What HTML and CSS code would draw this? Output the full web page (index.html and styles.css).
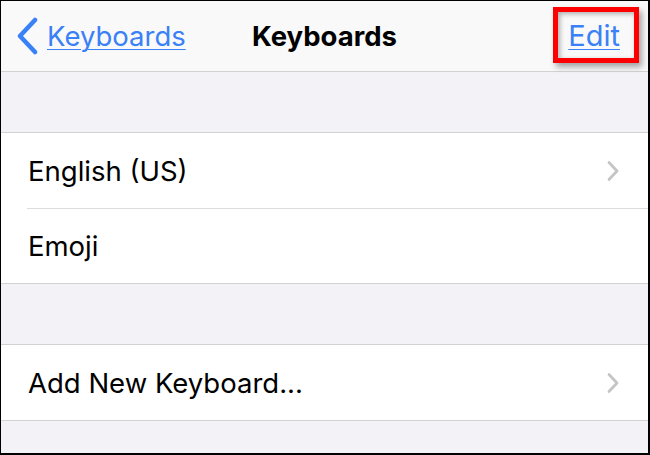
FILE: index.html
```html
<!DOCTYPE html>
<html lang="en">
<head>
    <meta charset="UTF-8">
    <title>Keyboards</title>
    <link rel="stylesheet" href="styles.css">
</head>
<body>
    <div class="screen">
        <div class="navbar">
            <a class="back" href="#">
                <svg class="back-chevron" width="22" height="38" viewBox="0 0 22 38">
                    <path d="M19 3 L4 19 L19 35" fill="none" stroke="#3a80f6" stroke-width="4.5" stroke-linecap="round" stroke-linejoin="round"/>
                </svg>
                <span class="back-label">Keyboards</span>
            </a>
            <h1 class="title">Keyboards</h1>
            <div class="edit-wrap">
                <a class="edit" href="#">Edit</a>
                <span class="highlight"></span>
            </div>
        </div>

        <div class="gap"></div>
        <div class="group">
            <div class="row">
                <span class="label">English (US)</span>
                <svg class="chevron" width="14" height="22" viewBox="0 0 14 22">
                    <path d="M3 2.5 L11 11 L3 19.5" fill="none" stroke="#c5c5c8" stroke-width="2.8" stroke-linecap="round" stroke-linejoin="round"/>
                </svg>
            </div>
            <div class="row">
                <span class="label">Emoji</span>
            </div>
        </div>

        <div class="gap"></div>
        <div class="group">
            <div class="row">
                <span class="label">Add New Keyboard...</span>
                <svg class="chevron" width="14" height="22" viewBox="0 0 14 22">
                    <path d="M3 2.5 L11 11 L3 19.5" fill="none" stroke="#c5c5c8" stroke-width="2.8" stroke-linecap="round" stroke-linejoin="round"/>
                </svg>
            </div>
        </div>
    </div>
</body>
</html>
```

FILE: styles.css
```css
body {
    margin: 0;
    font-family: Inter, "Noto Sans", sans-serif;
    color: #000;
}
.screen {
    width: 650px;
    height: 455px;
    box-sizing: border-box;
    border-style: solid;
    border-color: #000;
    border-width: 1px 2px 2px 1px;
    background: #f2f2f7; /* grouped background */
    overflow: hidden;
}
.navbar {
    height: 70px;
    background: #f9f9f9;
    border-bottom: 1px solid #d2d2d5;
    display: grid;
    grid-template-columns: 1fr auto 1fr;
    align-items: center;
    padding: 0 15px;
}
.back {
    display: flex;
    align-items: center;
    gap: 9px;
    color: #3a80f6;
    text-decoration: underline;
    text-decoration-thickness: 1px;
    text-underline-offset: 3px;
    font-size: 27.5px;
    justify-self: start;
}
.back-chevron {
    display: block;
}
.title {
    margin: 0;
    font-size: 27.5px;
    font-weight: 700;
}
.edit-wrap {
    justify-self: end;
    position: relative;
    margin-right: 13px;
}
.edit {
    display: block;
    line-height: 34px;
    color: #3a80f6;
    font-size: 29px;
    text-decoration: underline;
    text-decoration-thickness: 1px;
    text-underline-offset: 3px;
}
/* red annotation box drawn on top of the screenshot */
.highlight {
    position: absolute;
    left: -15px;
    right: -19px;
    top: -12px;
    bottom: -10px;
    border: 5px solid #f00;
    box-shadow: 3px 4px 6px rgba(0,0,0,0.35), inset 2px 2px 5px rgba(0,0,0,0.3);
}
.gap {
    height: 60px;
}
.group {
    background: #fff;
    border-top: 1px solid #d2d2d5;
    border-bottom: 1px solid #d2d2d5;
}
.row {
    height: 75px;
    display: flex;
    align-items: center;
    justify-content: space-between;
    padding: 0 28px 0 27px;
    font-size: 27.5px;
    box-sizing: border-box;
}
.row + .row {
    border-top: 1px solid #dcdcdf;
    margin-left: 26px;
    padding-left: 1px;
}
.chevron {
    display: block;
}
```
